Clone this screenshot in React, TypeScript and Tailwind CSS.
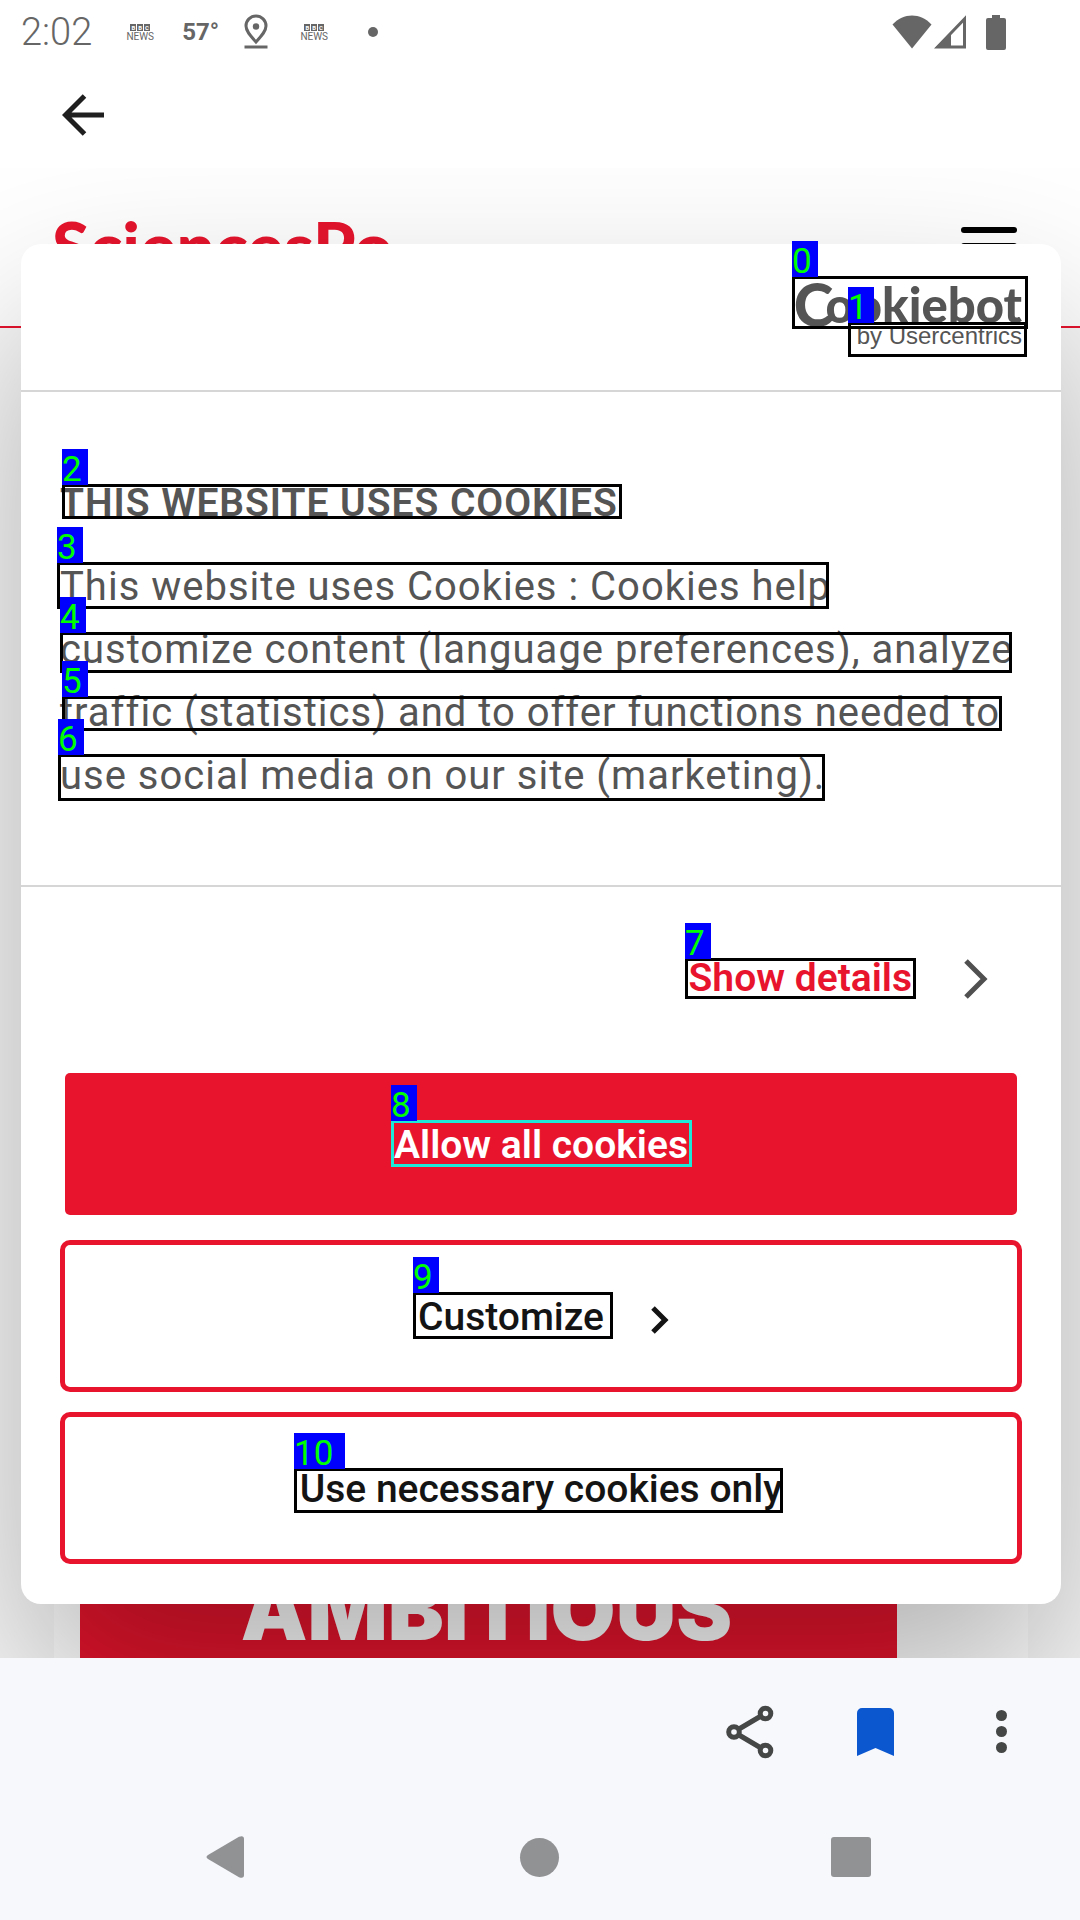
import React from "react";

function BbcNews() {
  return (
    <div className="flex w-7 flex-col items-center gap-px">
      <div className="flex gap-px">
        {["B", "B", "C"].map((c, i) => (
          <span key={i} className="bg-[#666] px-px text-[6px] leading-[7px] font-bold text-white">
            {c}
          </span>
        ))}
      </div>
      <span className="text-[10px] leading-[9px]">NEWS</span>
    </div>
  );
}

function StatusBar() {
  return (
    <div className="flex h-16 items-center pr-[74px] pl-[21px] text-[#666]">
      <span className="text-[38px] leading-[68px] font-light">2:02</span>
      <div className="ml-[34px] flex items-center">
        <BbcNews />
        <span className="ml-7 w-9 text-[24px] leading-[32px] font-bold">57°</span>
        <svg className="ml-[26px] h-9 w-6" viewBox="0 0 24 36" fill="none" stroke="#666" strokeWidth="3">
          <path d="M12 28C6 21.500 2 17 2 12a10 10 0 0 1 20 0c0 5-4 9.500-10 16z" />
          <circle cx="12" cy="12.500" r="3.200" fill="#666" stroke="none" />
          <path d="M.5 33h23" />
        </svg>
        <div className="ml-8">
          <BbcNews />
        </div>
        <span className="ml-10 size-[10px] rounded-full bg-[#666]" />
      </div>
      <div className="ml-auto flex items-center text-[#666]">
        <svg className="h-[34px] w-10" viewBox="0 0 40 34" fill="currentColor">
          <path d="M.5 9.500C6 3.500 13 .5 20 .5s14 3 19.500 9L20 33.500z" />
        </svg>
        <svg className="mr-px ml-[2px] h-[34px] w-8" viewBox="0 0 32 34">
          <path d="M30.500 4v28H3.500z" fill="none" stroke="currentColor" strokeWidth="3" />
          <path d="M17 17v16H1z" fill="currentColor" />
        </svg>
        <svg className="ml-[19px] h-[35px] w-5" viewBox="0 0 20 35" fill="currentColor">
          <path d="M6 0h8v3h4a2 2 0 0 1 2 2v28a2 2 0 0 1-2 2H2a2 2 0 0 1-2-2V5a2 2 0 0 1 2-2h4z" />
        </svg>
      </div>
    </div>
  );
}

function Toolbar() {
  return (
    <div className="flex h-[104px] items-center pb-[2px] pl-[62px]">
      <button aria-label="Back" className="block">
        <svg className="h-[42px] w-[42px]" viewBox="0 0 42 42" fill="none" stroke="#1f1f1f" strokeWidth="5">
          <path d="M42 21H4M22.500 2 3.500 21l19 19" />
        </svg>
      </button>
    </div>
  );
}

function PageBehind() {
  return (
    <div className="absolute inset-0 flex flex-col justify-between bg-[#f9f9f9]">
      <div className="flex h-40 items-start justify-between overflow-hidden border-b-2 border-[#e6142d] bg-white pr-[63px] pl-[52px]">
        <span className="pt-[38px] font-['Lato'] text-[68px] leading-[80px] font-black text-[#e6142d]">
          SciencesPo
        </span>
        <button aria-label="Menu" className="mt-[59px] flex w-[56px] flex-col gap-[10px]">
          <span className="h-[6px] rounded-full bg-black" />
          <span className="h-[6px] rounded-full bg-black" />
          <span className="h-[6px] rounded-full bg-black" />
        </button>
      </div>
      <div className="mr-[52px] ml-[54px] h-40 bg-white pr-[131px] pl-[26px]">
        <div className="flex h-full items-end justify-center bg-[#e6142d] pr-1 pb-0.5">
          <span className="font-['Inter'] text-[84px] leading-[92px] font-black text-white">
            AMBITIOUS
          </span>
        </div>
      </div>
    </div>
  );
}

const buttonBase =
  "flex h-[152px] w-full items-center justify-center rounded-[10px] border-[5px] pt-0.5 text-[39px] leading-[64px]";

function ConsentDialog() {
  return (
    <div
      role="dialog"
      aria-label="This website uses cookies"
      className="relative rounded-[20px] bg-white text-[39px] leading-[63px] text-[#555] shadow-[0_84px_178px_rgba(0,0,0,0.3)]"
    >
      <header className="flex h-[148px] flex-col items-end border-b-2 border-[#d6d6d6] pt-8 pr-[39px]">
        <span className="flex items-center font-['Lato'] text-[49px] leading-[56px] font-black">
          <span className="-mr-2 text-[60px]">C</span>ookiebot
        </span>
        <span className="-mt-2 font-['Liberation_Sans'] text-[24px] leading-[24px]">by Usercentrics</span>
      </header>
      <section className="border-b-2 border-[#d6d6d6] px-[39px] pt-20 pb-[78px]">
        <h1 className="mb-5 font-semibold tracking-wide">THIS WEBSITE USES COOKIES</h1>
        <p className="text-[40px] tracking-wide">
          This website uses Cookies : Cookies help
          <br />
          customize content (language preferences), analyze
          <br />
          traffic (statistics) and to offer functions needed to
          <br />
          use social media on our site (marketing).
        </p>
      </section>
      <section className="px-[39px] pb-10">
        <div className="flex justify-end pt-[60px] pr-[34px] pb-[58px]">
          <a href="#details" className="flex items-center gap-[52px] font-semibold text-[#e8142e]">
            Show details
            <svg className="h-[40px] w-6" viewBox="0 0 24 40" fill="none" stroke="#505050" strokeWidth="5">
              <path d="M2 2l18 18L2 38" />
            </svg>
          </a>
        </div>
        <div className="flex flex-col gap-5">
          <button className={`${buttonBase} border-transparent bg-[#e8142e] bg-clip-padding font-semibold text-white`}>
            Allow all cookies
          </button>
          <button className={`${buttonBase} gap-[46px] border-[#e8142e] pl-1.5 font-medium text-[#141414]`}>
            Customize
            <svg className="mt-1.5 h-7 w-5" viewBox="0 0 20 28" fill="none" stroke="#141414" strokeWidth="5">
              <path d="M3 2l12 12L3 26" />
            </svg>
          </button>
          <button className={`${buttonBase} border-[#e8142e] font-medium text-[#141414]`}>
            Use necessary cookies only
          </button>
        </div>
      </section>
    </div>
  );
}

function BottomBars() {
  return (
    <div className="h-[262px] bg-[#f7f8fc]">
      <div className="flex h-[146px] items-center justify-end pt-px pr-[73px]">
        <button aria-label="Share">
          <svg className="h-[54px] w-12" viewBox="0 0 48 54" fill="none" stroke="#444746" strokeWidth="5">
            <circle cx="8" cy="27" r="5.300" />
            <circle cx="39.500" cy="8.500" r="5.300" />
            <circle cx="39.500" cy="45.500" r="5.300" />
            <path d="M13 24l22-13M13 30l22 13" />
          </svg>
        </button>
        <button aria-label="Bookmark" className="ml-[83px]">
          <svg className="h-[48px] w-[37px]" viewBox="0 0 37 48" fill="#0b57d0">
            <path d="M5 0h27a5 5 0 0 1 5 5v43l-18.500-8L0 48V5a5 5 0 0 1 5-5z" />
          </svg>
        </button>
        <button aria-label="More options" className="ml-[102px] flex flex-col gap-[5px]">
          <span className="size-[11px] rounded-full bg-[#444746]" />
          <span className="size-[11px] rounded-full bg-[#444746]" />
          <span className="size-[11px] rounded-full bg-[#444746]" />
        </button>
      </div>
      <div className="flex h-[106px] items-center justify-between pr-[209px] pl-[206px]">
        <button aria-label="System back" className="w-[42px]">
          <svg className="h-[42px] w-[38px]" viewBox="0 0 38 42" fill="#919294">
            <path d="M2 19 33 .8Q38-1 38 3v36q0 4-5 2.200L2 23q-3-2 0-4z" />
          </svg>
        </button>
        <button aria-label="Home" className="size-[39px] rounded-full bg-[#919294]" />
        <button aria-label="Recents" className="size-10 rounded-[3px] bg-[#919294]" />
      </div>
    </div>
  );
}

const markers = [
  { id: 0, box: "left-[792px] top-[276px] w-[236px] h-[53px] border-black" },
  { id: 1, box: "left-[848px] top-[322px] w-[179px] h-[35px] border-black" },
  { id: 2, box: "left-[62px] top-[484px] w-[560px] h-[35px] border-black" },
  { id: 3, box: "left-[57px] top-[562px] w-[772px] h-[47px] border-black" },
  { id: 4, box: "left-[60px] top-[632px] w-[952px] h-[41px] border-black" },
  { id: 5, box: "left-[62px] top-[696px] w-[940px] h-[35px] border-black" },
  { id: 6, box: "left-[58px] top-[754px] w-[767px] h-[47px] border-black" },
  { id: 7, box: "left-[685px] top-[958px] w-[231px] h-[41px] border-black" },
  { id: 8, box: "left-[391px] top-[1120px] w-[301px] h-[47px] border-[#1de9d8]" },
  { id: 9, box: "left-[413px] top-[1292px] w-[200px] h-[47px] border-black" },
  { id: 10, box: "left-[294px] top-[1468px] w-[489px] h-[45px] border-black" },
];

function Markers() {
  return (
    <div className="pointer-events-none absolute inset-0">
      {markers.map((m) => (
        <div key={m.id} className={`absolute border-[3px] ${m.box}`}>
          <span
            className={`absolute -top-[38px] -left-[3px] h-9 bg-[#0000ff] text-[35px] leading-[42px] text-[#00ff00] ${
              m.id > 9 ? "w-[51px]" : "w-[26px]"
            }`}
          >
            {m.id}
          </span>
        </div>
      ))}
    </div>
  );
}

export default function App() {
  return (
    <div className="relative flex min-h-screen flex-col bg-white font-['Roboto',sans-serif]">
      <StatusBar />
      <Toolbar />
      <main className="relative overflow-hidden pt-[76px] pr-[19px] pb-[54px] pl-[21px]">
        <PageBehind />
        <ConsentDialog />
      </main>
      <BottomBars />
      <Markers />
    </div>
  );
}
